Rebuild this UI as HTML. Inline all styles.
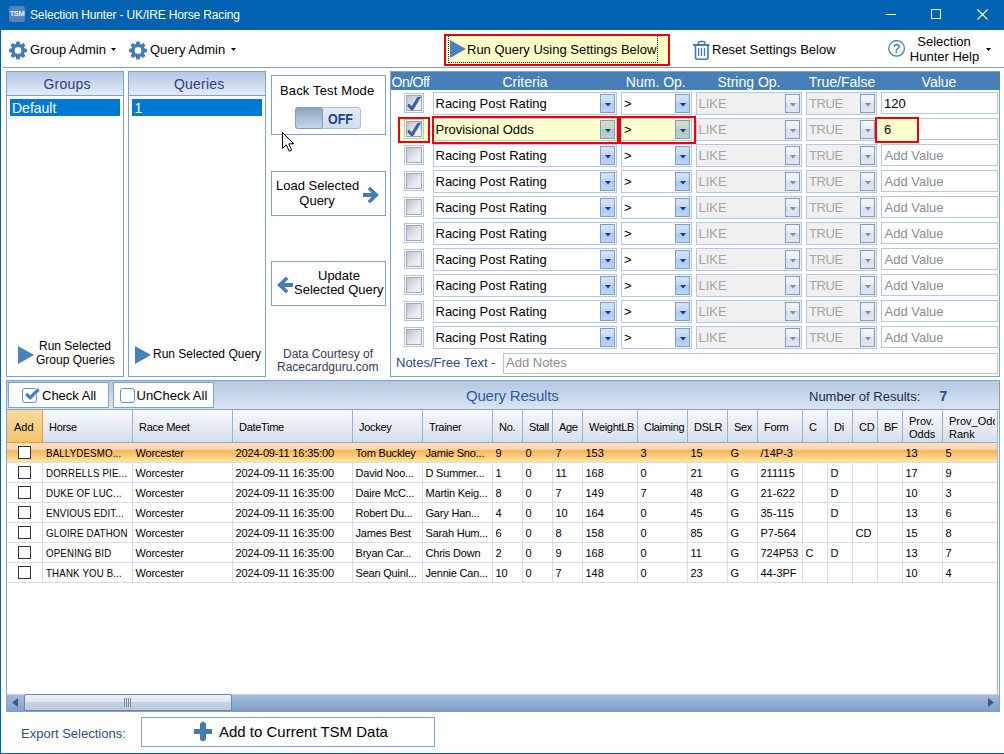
<!DOCTYPE html><html><head><meta charset="utf-8"><style>
html,body{margin:0;padding:0;}
body{width:1004px;height:754px;position:relative;overflow:hidden;background:#fff;font-family:"Liberation Sans", sans-serif;}
div{box-sizing:border-box;}
</style></head><body>
<div style="position:absolute;left:0px;top:0px;width:1004px;height:30px;background:#0062B0;"></div>
<div style="position:absolute;left:0px;top:30px;width:1px;height:724px;background:#0062B0;"></div>
<div style="position:absolute;left:0px;top:753px;width:1004px;height:1px;background:#0062B0;"></div>
<div style="position:absolute;left:9px;top:6px;width:16px;height:16px;background:#4F86BE;border-radius:2.5px;"></div>
<div style="position:absolute;left:9px;top:9px;width:16px;font-size:7.5px;line-height:10px;font-weight:700;color:#E8F0FA;text-align:center;letter-spacing:-0.4px;">TSM</div>
<div style="position:absolute;left:30px;top:8.34px;font-size:12px;line-height:15px;color:#fff;font-weight:400;white-space:nowrap;letter-spacing:-0.15px;">Selection Hunter - UK/IRE Horse Racing</div>
<div style="position:absolute;left:886px;top:14px;width:10px;height:1px;background:#fff;"></div>
<div style="position:absolute;left:931px;top:9px;width:10px;height:10px;border:1px solid #fff;"></div>
<svg style="position:absolute;left:977px;top:9px" width="11" height="11" viewBox="0 0 11 11"><path d="M0.5 0.5 L10.5 10.5 M10.5 0.5 L0.5 10.5" stroke="#fff" stroke-width="1.1"/></svg>
<svg style="position:absolute;left:9px;top:41px" width="19" height="19" viewBox="0 0 19 19"><path d="M15.34 7.33 L17.97 7.96 L17.97 11.04 L15.34 11.67 L15.02 12.45 L16.43 14.75 L14.25 16.93 L11.95 15.52 L11.17 15.84 L10.54 18.47 L7.46 18.47 L6.83 15.84 L6.05 15.52 L3.75 16.93 L1.57 14.75 L2.98 12.45 L2.66 11.67 L0.03 11.04 L0.03 7.96 L2.66 7.33 L2.98 6.55 L1.57 4.25 L3.75 2.07 L6.05 3.48 L6.83 3.16 L7.46 0.53 L10.54 0.53 L11.17 3.16 L11.95 3.48 L14.25 2.07 L16.43 4.25 L15.02 6.55 Z" fill="#437CB5"/><rect x="5.8" y="6.3" width="6.4" height="6.4" rx="2.2" fill="#fff"/></svg>
<div style="position:absolute;left:30px;top:41.50px;font-size:13px;line-height:16px;color:#000;font-weight:400;white-space:nowrap;">Group Admin</div>
<svg style="position:absolute;left:111px;top:48px" width="5" height="3" viewBox="0 0 5 3"><path d="M0 0 L5 0 L2.5 3 Z" fill="#000"/></svg>
<svg style="position:absolute;left:129px;top:41px" width="19" height="19" viewBox="0 0 19 19"><path d="M15.34 7.33 L17.97 7.96 L17.97 11.04 L15.34 11.67 L15.02 12.45 L16.43 14.75 L14.25 16.93 L11.95 15.52 L11.17 15.84 L10.54 18.47 L7.46 18.47 L6.83 15.84 L6.05 15.52 L3.75 16.93 L1.57 14.75 L2.98 12.45 L2.66 11.67 L0.03 11.04 L0.03 7.96 L2.66 7.33 L2.98 6.55 L1.57 4.25 L3.75 2.07 L6.05 3.48 L6.83 3.16 L7.46 0.53 L10.54 0.53 L11.17 3.16 L11.95 3.48 L14.25 2.07 L16.43 4.25 L15.02 6.55 Z" fill="#437CB5"/><rect x="5.8" y="6.3" width="6.4" height="6.4" rx="2.2" fill="#fff"/></svg>
<div style="position:absolute;left:150px;top:41.50px;font-size:13px;line-height:16px;color:#000;font-weight:400;white-space:nowrap;">Query Admin</div>
<svg style="position:absolute;left:231px;top:48px" width="5" height="3" viewBox="0 0 5 3"><path d="M0 0 L5 0 L2.5 3 Z" fill="#000"/></svg>
<div style="position:absolute;left:3px;top:67px;width:1001px;height:1px;background:#7DA2CE;"></div>
<div style="position:absolute;left:444px;top:34px;width:226px;height:32px;border:2px solid #F00000;background:#FFFFC8;"></div>
<div style="position:absolute;left:448px;top:36px;width:210px;height:27px;border:1px dotted #222;border-top:none;"></div>
<svg style="position:absolute;left:450px;top:40px" width="16" height="18" viewBox="0 0 16 18"><path d="M0 0 L16 9 L0 18 Z" fill="#4A82BF"/></svg>
<div style="position:absolute;left:467px;top:36px;width:190px;height:26px;overflow:hidden;">
</div>
<div style="position:absolute;left:467px;top:41.50px;font-size:13px;line-height:16px;color:#000;font-weight:400;white-space:nowrap;width:190px;overflow:hidden;">Run Query Using Settings Below</div>
<svg style="position:absolute;left:692px;top:40px" width="19" height="21" viewBox="0 0 19 21"><g fill="none" stroke="#437CB5"><rect x="1" y="4" width="16.5" height="2" fill="#437CB5" stroke="none"/><path d="M6.3 4.5 V3.2 Q6.3 1.5 8 1.5 H11 Q12.8 1.5 12.8 3.2 V4.5" stroke-width="1.6"/><path d="M3.5 6 V17.3 Q3.5 19.2 5.4 19.2 H14.1 Q16 19.2 16 17.3 V6" stroke-width="1.6"/><path d="M6.6 8 V16 M9.5 8 V16 M12.5 8 V16" stroke-width="1.3"/></g></svg>
<div style="position:absolute;left:712px;top:41.50px;font-size:13px;line-height:16px;color:#000;font-weight:400;white-space:nowrap;">Reset Settings Below</div>
<svg style="position:absolute;left:888px;top:40px" width="18" height="18" viewBox="0 0 18 18"><circle cx="8.6" cy="8.4" r="7.8" fill="none" stroke="#437CB5" stroke-width="1.3"/><text x="8.6" y="13" text-anchor="middle" font-family="Liberation Sans" font-size="12.5" fill="#437CB5" stroke="#437CB5" stroke-width="0.4">?</text></svg>
<div style="position:absolute;left:644px;width:600px;text-align:center;top:33.50px;font-size:13px;line-height:16px;color:#000;font-weight:400;white-space:nowrap;">Selection</div>
<div style="position:absolute;left:644.5px;width:600px;text-align:center;top:48.50px;font-size:13px;line-height:16px;color:#000;font-weight:400;white-space:nowrap;">Hunter Help</div>
<svg style="position:absolute;left:986px;top:48px" width="5" height="3" viewBox="0 0 5 3"><path d="M0 0 L5 0 L2.5 3 Z" fill="#000"/></svg>
<div style="position:absolute;left:6px;top:71px;width:118px;height:306px;border:1px solid #7DA2CE;"></div>
<div style="position:absolute;left:7px;top:72px;width:116px;height:23px;background:linear-gradient(#B3C6E4,#E4ECF7);"></div>
<div style="position:absolute;left:7px;top:95px;width:116px;height:1px;background:#7DA2CE;"></div>
<div style="position:absolute;left:43.5px;top:75.15px;font-size:14px;line-height:18px;color:#323C82;font-weight:400;white-space:nowrap;letter-spacing:0.2px;">Groups</div>
<div style="position:absolute;left:10px;top:99px;width:110px;height:17px;background:#0078D7;"></div>
<div style="position:absolute;left:12px;top:99.15px;font-size:14px;line-height:18px;color:#fff;font-weight:400;white-space:nowrap;">Default</div>
<div style="position:absolute;left:128px;top:71px;width:138px;height:306px;border:1px solid #7DA2CE;"></div>
<div style="position:absolute;left:129px;top:72px;width:136px;height:23px;background:linear-gradient(#B3C6E4,#E4ECF7);"></div>
<div style="position:absolute;left:129px;top:95px;width:136px;height:1px;background:#7DA2CE;"></div>
<div style="position:absolute;left:174px;top:75.15px;font-size:14px;line-height:18px;color:#323C82;font-weight:400;white-space:nowrap;letter-spacing:0.2px;">Queries</div>
<div style="position:absolute;left:132px;top:99px;width:130px;height:17px;background:#0078D7;"></div>
<div style="position:absolute;left:134.5px;top:99.15px;font-size:14px;line-height:18px;color:#fff;font-weight:400;white-space:nowrap;">1</div>
<svg style="position:absolute;left:18px;top:346px" width="16" height="18" viewBox="0 0 16 18"><path d="M0 0 L16 9 L0 18 Z" fill="#4A82BF"/></svg>
<div style="position:absolute;left:39px;top:339.34px;font-size:12px;line-height:15px;color:#000;font-weight:400;white-space:nowrap;">Run Selected</div>
<div style="position:absolute;left:36px;top:353.34px;font-size:12px;line-height:15px;color:#000;font-weight:400;white-space:nowrap;">Group Queries</div>
<svg style="position:absolute;left:135px;top:346px" width="16" height="18" viewBox="0 0 16 18"><path d="M0 0 L16 9 L0 18 Z" fill="#4A82BF"/></svg>
<div style="position:absolute;left:153px;top:347.34px;font-size:12px;line-height:15px;color:#000;font-weight:400;white-space:nowrap;">Run Selected Query</div>
<div style="position:absolute;left:271px;top:75px;width:115px;height:60px;border:1px solid #7DA2CE;"></div>
<div style="position:absolute;left:280px;top:82.50px;font-size:13px;line-height:16px;color:#000;font-weight:400;white-space:nowrap;letter-spacing:0.15px;">Back Test Mode</div>
<div style="position:absolute;left:295px;top:107px;width:66px;height:22px;border:1px solid #A9C0DE;border-radius:3px;background:linear-gradient(#E3EAF4,#D3DDEB);"></div>
<div style="position:absolute;left:295px;top:107px;width:28px;height:22px;border:1px solid #7F9DC6;border-radius:3px;background:linear-gradient(#8EA4BD,#C6D6EA);"></div>
<div style="position:absolute;left:328.3px;top:110.15px;font-size:14px;line-height:18px;color:#1F3F99;font-weight:700;white-space:nowrap;transform:scaleX(0.89);transform-origin:left;">OFF</div>
<div style="position:absolute;left:271px;top:171px;width:115px;height:45px;border:1px solid #7DA2CE;"></div>
<div style="position:absolute;left:276px;top:177.50px;font-size:13px;line-height:16px;color:#000;font-weight:400;white-space:nowrap;">Load Selected</div>
<div style="position:absolute;left:17px;width:600px;text-align:center;top:192.50px;font-size:13px;line-height:16px;color:#000;font-weight:400;white-space:nowrap;">Query</div>
<svg style="position:absolute;left:363px;top:187px" width="17" height="17" viewBox="0 0 17 17"><path d="M0 6.1 H8.6 L4.6 2.1 L7.1 -0.2 L16 8 L7.1 16.2 L4.6 13.9 L8.6 9.9 H0 Z" fill="#437CB5"/></svg>
<div style="position:absolute;left:271px;top:261px;width:115px;height:45px;border:1px solid #7DA2CE;"></div>
<div style="position:absolute;left:318px;top:267.50px;font-size:13px;line-height:16px;color:#000;font-weight:400;white-space:nowrap;">Update</div>
<div style="position:absolute;left:294px;top:281.50px;font-size:13px;line-height:16px;color:#000;font-weight:400;white-space:nowrap;">Selected Query</div>
<svg style="position:absolute;left:277px;top:277px" width="17" height="17" viewBox="0 0 17 17"><path d="M16 6.1 H7.4 L11.4 2.1 L8.9 -0.2 L0 8 L8.9 16.2 L11.4 13.9 L7.4 9.9 H16 Z" fill="#437CB5"/></svg>
<div style="position:absolute;left:283px;top:347.34px;font-size:12px;line-height:15px;color:#3A3A55;font-weight:400;white-space:nowrap;">Data Courtesy of</div>
<div style="position:absolute;left:277px;top:360.34px;font-size:12px;line-height:15px;color:#3A3A55;font-weight:400;white-space:nowrap;">Racecardguru.com</div>
<div style="position:absolute;left:390px;top:71px;width:610px;height:306px;border:1px solid #7DA2CE;"></div>
<div style="position:absolute;left:391px;top:72px;width:609px;height:18px;background:#4780B8;"></div>
<div style="position:absolute;left:391.5px;top:73.15px;font-size:14px;line-height:18px;color:#fff;font-weight:400;white-space:nowrap;letter-spacing:-0.5px;">On/Off</div>
<div style="position:absolute;left:225px;width:600px;text-align:center;top:73.15px;font-size:14px;line-height:18px;color:#fff;font-weight:400;white-space:nowrap;">Criteria</div>
<div style="position:absolute;left:355.79999999999995px;width:600px;text-align:center;top:73.15px;font-size:14px;line-height:18px;color:#fff;font-weight:400;white-space:nowrap;">Num. Op.</div>
<div style="position:absolute;left:449px;width:600px;text-align:center;top:73.15px;font-size:14px;line-height:18px;color:#fff;font-weight:400;white-space:nowrap;">String Op.</div>
<div style="position:absolute;left:542px;width:600px;text-align:center;top:73.15px;font-size:14px;line-height:18px;color:#fff;font-weight:400;white-space:nowrap;">True/False</div>
<div style="position:absolute;left:639px;width:600px;text-align:center;top:73.15px;font-size:14px;line-height:18px;color:#fff;font-weight:400;white-space:nowrap;">Value</div>
<div style="position:absolute;left:404px;top:93px;width:20px;height:20px;border:1px solid #AFC6E3;"></div>
<div style="position:absolute;left:406px;top:95px;width:16px;height:16px;border:1px solid #9CA6B4;background:linear-gradient(135deg,#BAC3D0,#E6E9EE 60%,#F0F2F5);"></div>
<svg style="position:absolute;left:400px;top:90px" width="28" height="26" viewBox="0 0 28 26"><path d="M7.9 14.3 Q8.8 13.5 9.8 14.2 L11.7 16.3 L17.3 7 L21.3 6.4 L13.1 20.3 L11.2 20.2 L7.6 16.4 Q7.3 15 7.9 14.3 Z" fill="#3F62A0"/></svg>
<div style="position:absolute;left:433px;top:92px;width:184px;height:23px;border:1px solid #B4C8E2;background:#fff;"></div>
<div style="position:absolute;left:435.5px;top:95.50px;font-size:13px;line-height:16px;color:#000;font-weight:400;white-space:nowrap;">Racing Post Rating</div>
<div style="position:absolute;left:600px;top:94px;width:15px;height:19px;border:1px solid #7F9CC8;background:linear-gradient(#D6E4F8 0%,#C3D8F6 45%,#A9CAF3 50%,#BBD6F8 100%);"></div>
<svg style="position:absolute;left:605px;top:103px" width="6" height="4" viewBox="0 0 6 4"><path d="M0 0 L6 0 L3 3.5 Z" fill="#1A3A7A"/></svg>
<div style="position:absolute;left:621px;top:92px;width:71px;height:23px;border:1px solid #B4C8E2;background:#fff;"></div>
<div style="position:absolute;left:624px;top:95.50px;font-size:13px;line-height:16px;color:#000;font-weight:400;white-space:nowrap;">&gt;</div>
<div style="position:absolute;left:675px;top:94px;width:15px;height:19px;border:1px solid #7F9CC8;background:linear-gradient(#D6E4F8 0%,#C3D8F6 45%,#A9CAF3 50%,#BBD6F8 100%);"></div>
<svg style="position:absolute;left:680px;top:103px" width="6" height="4" viewBox="0 0 6 4"><path d="M0 0 L6 0 L3 3.5 Z" fill="#1A3A7A"/></svg>
<div style="position:absolute;left:696px;top:92px;width:106px;height:23px;border:1px solid #B4C8E2;background:#F0F0F0;"></div>
<div style="position:absolute;left:698.5px;top:95.50px;font-size:13px;line-height:16px;color:#A6A6A6;font-weight:400;white-space:nowrap;">LIKE</div>
<div style="position:absolute;left:785px;top:94px;width:15px;height:19px;border:1px solid #7F9CC8;background:linear-gradient(#F4F7FC 0%,#E6EDF8 45%,#D5E1F1 50%,#DEE8F4 100%);"></div>
<svg style="position:absolute;left:790px;top:103px" width="6" height="4" viewBox="0 0 6 4"><path d="M0 0 L6 0 L3 3.5 Z" fill="#8A8A8A"/></svg>
<div style="position:absolute;left:806px;top:92px;width:71px;height:23px;border:1px solid #B4C8E2;background:#F0F0F0;"></div>
<div style="position:absolute;left:809px;top:95.50px;font-size:13px;line-height:16px;color:#A6A6A6;font-weight:400;white-space:nowrap;letter-spacing:-0.4px;">TRUE</div>
<div style="position:absolute;left:860px;top:94px;width:15px;height:19px;border:1px solid #7F9CC8;background:linear-gradient(#F4F7FC 0%,#E6EDF8 45%,#D5E1F1 50%,#DEE8F4 100%);"></div>
<svg style="position:absolute;left:865px;top:103px" width="6" height="4" viewBox="0 0 6 4"><path d="M0 0 L6 0 L3 3.5 Z" fill="#8A8A8A"/></svg>
<div style="position:absolute;left:881px;top:92px;width:117px;height:22px;border:1px solid #B4C8E2;background:#fff;"></div>
<div style="position:absolute;left:884px;top:95.50px;font-size:13px;line-height:16px;color:#000;font-weight:400;white-space:nowrap;">120</div>
<div style="position:absolute;left:398px;top:117px;width:32px;height:26px;border:2px solid #F00000;background:#FFFFD0;"></div>
<div style="position:absolute;left:404px;top:119px;width:20px;height:20px;border:1px solid #AFC6E3;background:#FFFFD0;"></div>
<div style="position:absolute;left:406px;top:121px;width:16px;height:16px;border:1px solid #9CA6B4;background:linear-gradient(135deg,#BAC3D0,#E6E9EE 60%,#F0F2F5);"></div>
<svg style="position:absolute;left:400px;top:116px" width="28" height="26" viewBox="0 0 28 26"><path d="M7.9 14.3 Q8.8 13.5 9.8 14.2 L11.7 16.3 L17.3 7 L21.3 6.4 L13.1 20.3 L11.2 20.2 L7.6 16.4 Q7.3 15 7.9 14.3 Z" fill="#3F62A0"/></svg>
<div style="position:absolute;left:433px;top:118px;width:184px;height:23px;border:1px solid #B4C8E2;background:#FFFFD0;"></div>
<div style="position:absolute;left:435.5px;top:121.50px;font-size:13px;line-height:16px;color:#000;font-weight:400;white-space:nowrap;">Provisional Odds</div>
<div style="position:absolute;left:600px;top:120px;width:15px;height:19px;border:1px solid #7F9CC8;background:linear-gradient(#D3E0C8 0%,#C4D8C6 45%,#AFCBC4 50%,#BAD3C8 100%);"></div>
<svg style="position:absolute;left:605px;top:129px" width="6" height="4" viewBox="0 0 6 4"><path d="M0 0 L6 0 L3 3.5 Z" fill="#1A3A7A"/></svg>
<div style="position:absolute;left:621px;top:118px;width:71px;height:23px;border:1px solid #B4C8E2;background:#FFFFD0;"></div>
<div style="position:absolute;left:624px;top:121.50px;font-size:13px;line-height:16px;color:#000;font-weight:400;white-space:nowrap;">&gt;</div>
<div style="position:absolute;left:675px;top:120px;width:15px;height:19px;border:1px solid #7F9CC8;background:linear-gradient(#D3E0C8 0%,#C4D8C6 45%,#AFCBC4 50%,#BAD3C8 100%);"></div>
<svg style="position:absolute;left:680px;top:129px" width="6" height="4" viewBox="0 0 6 4"><path d="M0 0 L6 0 L3 3.5 Z" fill="#1A3A7A"/></svg>
<div style="position:absolute;left:696px;top:118px;width:106px;height:23px;border:1px solid #B4C8E2;background:#F0F0F0;"></div>
<div style="position:absolute;left:698.5px;top:121.50px;font-size:13px;line-height:16px;color:#A6A6A6;font-weight:400;white-space:nowrap;">LIKE</div>
<div style="position:absolute;left:785px;top:120px;width:15px;height:19px;border:1px solid #7F9CC8;background:linear-gradient(#F4F7FC 0%,#E6EDF8 45%,#D5E1F1 50%,#DEE8F4 100%);"></div>
<svg style="position:absolute;left:790px;top:129px" width="6" height="4" viewBox="0 0 6 4"><path d="M0 0 L6 0 L3 3.5 Z" fill="#8A8A8A"/></svg>
<div style="position:absolute;left:806px;top:118px;width:71px;height:23px;border:1px solid #B4C8E2;background:#F0F0F0;"></div>
<div style="position:absolute;left:809px;top:121.50px;font-size:13px;line-height:16px;color:#A6A6A6;font-weight:400;white-space:nowrap;letter-spacing:-0.4px;">TRUE</div>
<div style="position:absolute;left:860px;top:120px;width:15px;height:19px;border:1px solid #7F9CC8;background:linear-gradient(#F4F7FC 0%,#E6EDF8 45%,#D5E1F1 50%,#DEE8F4 100%);"></div>
<svg style="position:absolute;left:865px;top:129px" width="6" height="4" viewBox="0 0 6 4"><path d="M0 0 L6 0 L3 3.5 Z" fill="#8A8A8A"/></svg>
<div style="position:absolute;left:881px;top:118px;width:117px;height:22px;border:1px solid #B4C8E2;background:#fff;"></div>
<div style="position:absolute;left:875px;top:117px;width:44px;height:26px;border:2px solid #F00000;background:#FFFFD0;"></div>
<div style="position:absolute;left:884px;top:121.50px;font-size:13px;line-height:16px;color:#000;font-weight:400;white-space:nowrap;">6</div>
<div style="position:absolute;left:404px;top:145px;width:20px;height:20px;border:1px solid #AFC6E3;"></div>
<div style="position:absolute;left:406px;top:147px;width:16px;height:16px;border:1px solid #9CA6B4;background:linear-gradient(135deg,#BAC3D0,#E6E9EE 60%,#F0F2F5);"></div>
<div style="position:absolute;left:433px;top:144px;width:184px;height:23px;border:1px solid #B4C8E2;background:#fff;"></div>
<div style="position:absolute;left:435.5px;top:147.50px;font-size:13px;line-height:16px;color:#000;font-weight:400;white-space:nowrap;">Racing Post Rating</div>
<div style="position:absolute;left:600px;top:146px;width:15px;height:19px;border:1px solid #7F9CC8;background:linear-gradient(#D6E4F8 0%,#C3D8F6 45%,#A9CAF3 50%,#BBD6F8 100%);"></div>
<svg style="position:absolute;left:605px;top:155px" width="6" height="4" viewBox="0 0 6 4"><path d="M0 0 L6 0 L3 3.5 Z" fill="#1A3A7A"/></svg>
<div style="position:absolute;left:621px;top:144px;width:71px;height:23px;border:1px solid #B4C8E2;background:#fff;"></div>
<div style="position:absolute;left:624px;top:147.50px;font-size:13px;line-height:16px;color:#000;font-weight:400;white-space:nowrap;">&gt;</div>
<div style="position:absolute;left:675px;top:146px;width:15px;height:19px;border:1px solid #7F9CC8;background:linear-gradient(#D6E4F8 0%,#C3D8F6 45%,#A9CAF3 50%,#BBD6F8 100%);"></div>
<svg style="position:absolute;left:680px;top:155px" width="6" height="4" viewBox="0 0 6 4"><path d="M0 0 L6 0 L3 3.5 Z" fill="#1A3A7A"/></svg>
<div style="position:absolute;left:696px;top:144px;width:106px;height:23px;border:1px solid #B4C8E2;background:#F0F0F0;"></div>
<div style="position:absolute;left:698.5px;top:147.50px;font-size:13px;line-height:16px;color:#A6A6A6;font-weight:400;white-space:nowrap;">LIKE</div>
<div style="position:absolute;left:785px;top:146px;width:15px;height:19px;border:1px solid #7F9CC8;background:linear-gradient(#F4F7FC 0%,#E6EDF8 45%,#D5E1F1 50%,#DEE8F4 100%);"></div>
<svg style="position:absolute;left:790px;top:155px" width="6" height="4" viewBox="0 0 6 4"><path d="M0 0 L6 0 L3 3.5 Z" fill="#8A8A8A"/></svg>
<div style="position:absolute;left:806px;top:144px;width:71px;height:23px;border:1px solid #B4C8E2;background:#F0F0F0;"></div>
<div style="position:absolute;left:809px;top:147.50px;font-size:13px;line-height:16px;color:#A6A6A6;font-weight:400;white-space:nowrap;letter-spacing:-0.4px;">TRUE</div>
<div style="position:absolute;left:860px;top:146px;width:15px;height:19px;border:1px solid #7F9CC8;background:linear-gradient(#F4F7FC 0%,#E6EDF8 45%,#D5E1F1 50%,#DEE8F4 100%);"></div>
<svg style="position:absolute;left:865px;top:155px" width="6" height="4" viewBox="0 0 6 4"><path d="M0 0 L6 0 L3 3.5 Z" fill="#8A8A8A"/></svg>
<div style="position:absolute;left:881px;top:144px;width:117px;height:22px;border:1px solid #B4C8E2;background:#fff;"></div>
<div style="position:absolute;left:884.5px;top:147.50px;font-size:13px;line-height:16px;color:#8C8C8C;font-weight:400;white-space:nowrap;">Add Value</div>
<div style="position:absolute;left:404px;top:171px;width:20px;height:20px;border:1px solid #AFC6E3;"></div>
<div style="position:absolute;left:406px;top:173px;width:16px;height:16px;border:1px solid #9CA6B4;background:linear-gradient(135deg,#BAC3D0,#E6E9EE 60%,#F0F2F5);"></div>
<div style="position:absolute;left:433px;top:170px;width:184px;height:23px;border:1px solid #B4C8E2;background:#fff;"></div>
<div style="position:absolute;left:435.5px;top:173.50px;font-size:13px;line-height:16px;color:#000;font-weight:400;white-space:nowrap;">Racing Post Rating</div>
<div style="position:absolute;left:600px;top:172px;width:15px;height:19px;border:1px solid #7F9CC8;background:linear-gradient(#D6E4F8 0%,#C3D8F6 45%,#A9CAF3 50%,#BBD6F8 100%);"></div>
<svg style="position:absolute;left:605px;top:181px" width="6" height="4" viewBox="0 0 6 4"><path d="M0 0 L6 0 L3 3.5 Z" fill="#1A3A7A"/></svg>
<div style="position:absolute;left:621px;top:170px;width:71px;height:23px;border:1px solid #B4C8E2;background:#fff;"></div>
<div style="position:absolute;left:624px;top:173.50px;font-size:13px;line-height:16px;color:#000;font-weight:400;white-space:nowrap;">&gt;</div>
<div style="position:absolute;left:675px;top:172px;width:15px;height:19px;border:1px solid #7F9CC8;background:linear-gradient(#D6E4F8 0%,#C3D8F6 45%,#A9CAF3 50%,#BBD6F8 100%);"></div>
<svg style="position:absolute;left:680px;top:181px" width="6" height="4" viewBox="0 0 6 4"><path d="M0 0 L6 0 L3 3.5 Z" fill="#1A3A7A"/></svg>
<div style="position:absolute;left:696px;top:170px;width:106px;height:23px;border:1px solid #B4C8E2;background:#F0F0F0;"></div>
<div style="position:absolute;left:698.5px;top:173.50px;font-size:13px;line-height:16px;color:#A6A6A6;font-weight:400;white-space:nowrap;">LIKE</div>
<div style="position:absolute;left:785px;top:172px;width:15px;height:19px;border:1px solid #7F9CC8;background:linear-gradient(#F4F7FC 0%,#E6EDF8 45%,#D5E1F1 50%,#DEE8F4 100%);"></div>
<svg style="position:absolute;left:790px;top:181px" width="6" height="4" viewBox="0 0 6 4"><path d="M0 0 L6 0 L3 3.5 Z" fill="#8A8A8A"/></svg>
<div style="position:absolute;left:806px;top:170px;width:71px;height:23px;border:1px solid #B4C8E2;background:#F0F0F0;"></div>
<div style="position:absolute;left:809px;top:173.50px;font-size:13px;line-height:16px;color:#A6A6A6;font-weight:400;white-space:nowrap;letter-spacing:-0.4px;">TRUE</div>
<div style="position:absolute;left:860px;top:172px;width:15px;height:19px;border:1px solid #7F9CC8;background:linear-gradient(#F4F7FC 0%,#E6EDF8 45%,#D5E1F1 50%,#DEE8F4 100%);"></div>
<svg style="position:absolute;left:865px;top:181px" width="6" height="4" viewBox="0 0 6 4"><path d="M0 0 L6 0 L3 3.5 Z" fill="#8A8A8A"/></svg>
<div style="position:absolute;left:881px;top:170px;width:117px;height:22px;border:1px solid #B4C8E2;background:#fff;"></div>
<div style="position:absolute;left:884.5px;top:173.50px;font-size:13px;line-height:16px;color:#8C8C8C;font-weight:400;white-space:nowrap;">Add Value</div>
<div style="position:absolute;left:404px;top:197px;width:20px;height:20px;border:1px solid #AFC6E3;"></div>
<div style="position:absolute;left:406px;top:199px;width:16px;height:16px;border:1px solid #9CA6B4;background:linear-gradient(135deg,#BAC3D0,#E6E9EE 60%,#F0F2F5);"></div>
<div style="position:absolute;left:433px;top:196px;width:184px;height:23px;border:1px solid #B4C8E2;background:#fff;"></div>
<div style="position:absolute;left:435.5px;top:199.50px;font-size:13px;line-height:16px;color:#000;font-weight:400;white-space:nowrap;">Racing Post Rating</div>
<div style="position:absolute;left:600px;top:198px;width:15px;height:19px;border:1px solid #7F9CC8;background:linear-gradient(#D6E4F8 0%,#C3D8F6 45%,#A9CAF3 50%,#BBD6F8 100%);"></div>
<svg style="position:absolute;left:605px;top:207px" width="6" height="4" viewBox="0 0 6 4"><path d="M0 0 L6 0 L3 3.5 Z" fill="#1A3A7A"/></svg>
<div style="position:absolute;left:621px;top:196px;width:71px;height:23px;border:1px solid #B4C8E2;background:#fff;"></div>
<div style="position:absolute;left:624px;top:199.50px;font-size:13px;line-height:16px;color:#000;font-weight:400;white-space:nowrap;">&gt;</div>
<div style="position:absolute;left:675px;top:198px;width:15px;height:19px;border:1px solid #7F9CC8;background:linear-gradient(#D6E4F8 0%,#C3D8F6 45%,#A9CAF3 50%,#BBD6F8 100%);"></div>
<svg style="position:absolute;left:680px;top:207px" width="6" height="4" viewBox="0 0 6 4"><path d="M0 0 L6 0 L3 3.5 Z" fill="#1A3A7A"/></svg>
<div style="position:absolute;left:696px;top:196px;width:106px;height:23px;border:1px solid #B4C8E2;background:#F0F0F0;"></div>
<div style="position:absolute;left:698.5px;top:199.50px;font-size:13px;line-height:16px;color:#A6A6A6;font-weight:400;white-space:nowrap;">LIKE</div>
<div style="position:absolute;left:785px;top:198px;width:15px;height:19px;border:1px solid #7F9CC8;background:linear-gradient(#F4F7FC 0%,#E6EDF8 45%,#D5E1F1 50%,#DEE8F4 100%);"></div>
<svg style="position:absolute;left:790px;top:207px" width="6" height="4" viewBox="0 0 6 4"><path d="M0 0 L6 0 L3 3.5 Z" fill="#8A8A8A"/></svg>
<div style="position:absolute;left:806px;top:196px;width:71px;height:23px;border:1px solid #B4C8E2;background:#F0F0F0;"></div>
<div style="position:absolute;left:809px;top:199.50px;font-size:13px;line-height:16px;color:#A6A6A6;font-weight:400;white-space:nowrap;letter-spacing:-0.4px;">TRUE</div>
<div style="position:absolute;left:860px;top:198px;width:15px;height:19px;border:1px solid #7F9CC8;background:linear-gradient(#F4F7FC 0%,#E6EDF8 45%,#D5E1F1 50%,#DEE8F4 100%);"></div>
<svg style="position:absolute;left:865px;top:207px" width="6" height="4" viewBox="0 0 6 4"><path d="M0 0 L6 0 L3 3.5 Z" fill="#8A8A8A"/></svg>
<div style="position:absolute;left:881px;top:196px;width:117px;height:22px;border:1px solid #B4C8E2;background:#fff;"></div>
<div style="position:absolute;left:884.5px;top:199.50px;font-size:13px;line-height:16px;color:#8C8C8C;font-weight:400;white-space:nowrap;">Add Value</div>
<div style="position:absolute;left:404px;top:223px;width:20px;height:20px;border:1px solid #AFC6E3;"></div>
<div style="position:absolute;left:406px;top:225px;width:16px;height:16px;border:1px solid #9CA6B4;background:linear-gradient(135deg,#BAC3D0,#E6E9EE 60%,#F0F2F5);"></div>
<div style="position:absolute;left:433px;top:222px;width:184px;height:23px;border:1px solid #B4C8E2;background:#fff;"></div>
<div style="position:absolute;left:435.5px;top:225.50px;font-size:13px;line-height:16px;color:#000;font-weight:400;white-space:nowrap;">Racing Post Rating</div>
<div style="position:absolute;left:600px;top:224px;width:15px;height:19px;border:1px solid #7F9CC8;background:linear-gradient(#D6E4F8 0%,#C3D8F6 45%,#A9CAF3 50%,#BBD6F8 100%);"></div>
<svg style="position:absolute;left:605px;top:233px" width="6" height="4" viewBox="0 0 6 4"><path d="M0 0 L6 0 L3 3.5 Z" fill="#1A3A7A"/></svg>
<div style="position:absolute;left:621px;top:222px;width:71px;height:23px;border:1px solid #B4C8E2;background:#fff;"></div>
<div style="position:absolute;left:624px;top:225.50px;font-size:13px;line-height:16px;color:#000;font-weight:400;white-space:nowrap;">&gt;</div>
<div style="position:absolute;left:675px;top:224px;width:15px;height:19px;border:1px solid #7F9CC8;background:linear-gradient(#D6E4F8 0%,#C3D8F6 45%,#A9CAF3 50%,#BBD6F8 100%);"></div>
<svg style="position:absolute;left:680px;top:233px" width="6" height="4" viewBox="0 0 6 4"><path d="M0 0 L6 0 L3 3.5 Z" fill="#1A3A7A"/></svg>
<div style="position:absolute;left:696px;top:222px;width:106px;height:23px;border:1px solid #B4C8E2;background:#F0F0F0;"></div>
<div style="position:absolute;left:698.5px;top:225.50px;font-size:13px;line-height:16px;color:#A6A6A6;font-weight:400;white-space:nowrap;">LIKE</div>
<div style="position:absolute;left:785px;top:224px;width:15px;height:19px;border:1px solid #7F9CC8;background:linear-gradient(#F4F7FC 0%,#E6EDF8 45%,#D5E1F1 50%,#DEE8F4 100%);"></div>
<svg style="position:absolute;left:790px;top:233px" width="6" height="4" viewBox="0 0 6 4"><path d="M0 0 L6 0 L3 3.5 Z" fill="#8A8A8A"/></svg>
<div style="position:absolute;left:806px;top:222px;width:71px;height:23px;border:1px solid #B4C8E2;background:#F0F0F0;"></div>
<div style="position:absolute;left:809px;top:225.50px;font-size:13px;line-height:16px;color:#A6A6A6;font-weight:400;white-space:nowrap;letter-spacing:-0.4px;">TRUE</div>
<div style="position:absolute;left:860px;top:224px;width:15px;height:19px;border:1px solid #7F9CC8;background:linear-gradient(#F4F7FC 0%,#E6EDF8 45%,#D5E1F1 50%,#DEE8F4 100%);"></div>
<svg style="position:absolute;left:865px;top:233px" width="6" height="4" viewBox="0 0 6 4"><path d="M0 0 L6 0 L3 3.5 Z" fill="#8A8A8A"/></svg>
<div style="position:absolute;left:881px;top:222px;width:117px;height:22px;border:1px solid #B4C8E2;background:#fff;"></div>
<div style="position:absolute;left:884.5px;top:225.50px;font-size:13px;line-height:16px;color:#8C8C8C;font-weight:400;white-space:nowrap;">Add Value</div>
<div style="position:absolute;left:404px;top:249px;width:20px;height:20px;border:1px solid #AFC6E3;"></div>
<div style="position:absolute;left:406px;top:251px;width:16px;height:16px;border:1px solid #9CA6B4;background:linear-gradient(135deg,#BAC3D0,#E6E9EE 60%,#F0F2F5);"></div>
<div style="position:absolute;left:433px;top:248px;width:184px;height:23px;border:1px solid #B4C8E2;background:#fff;"></div>
<div style="position:absolute;left:435.5px;top:251.50px;font-size:13px;line-height:16px;color:#000;font-weight:400;white-space:nowrap;">Racing Post Rating</div>
<div style="position:absolute;left:600px;top:250px;width:15px;height:19px;border:1px solid #7F9CC8;background:linear-gradient(#D6E4F8 0%,#C3D8F6 45%,#A9CAF3 50%,#BBD6F8 100%);"></div>
<svg style="position:absolute;left:605px;top:259px" width="6" height="4" viewBox="0 0 6 4"><path d="M0 0 L6 0 L3 3.5 Z" fill="#1A3A7A"/></svg>
<div style="position:absolute;left:621px;top:248px;width:71px;height:23px;border:1px solid #B4C8E2;background:#fff;"></div>
<div style="position:absolute;left:624px;top:251.50px;font-size:13px;line-height:16px;color:#000;font-weight:400;white-space:nowrap;">&gt;</div>
<div style="position:absolute;left:675px;top:250px;width:15px;height:19px;border:1px solid #7F9CC8;background:linear-gradient(#D6E4F8 0%,#C3D8F6 45%,#A9CAF3 50%,#BBD6F8 100%);"></div>
<svg style="position:absolute;left:680px;top:259px" width="6" height="4" viewBox="0 0 6 4"><path d="M0 0 L6 0 L3 3.5 Z" fill="#1A3A7A"/></svg>
<div style="position:absolute;left:696px;top:248px;width:106px;height:23px;border:1px solid #B4C8E2;background:#F0F0F0;"></div>
<div style="position:absolute;left:698.5px;top:251.50px;font-size:13px;line-height:16px;color:#A6A6A6;font-weight:400;white-space:nowrap;">LIKE</div>
<div style="position:absolute;left:785px;top:250px;width:15px;height:19px;border:1px solid #7F9CC8;background:linear-gradient(#F4F7FC 0%,#E6EDF8 45%,#D5E1F1 50%,#DEE8F4 100%);"></div>
<svg style="position:absolute;left:790px;top:259px" width="6" height="4" viewBox="0 0 6 4"><path d="M0 0 L6 0 L3 3.5 Z" fill="#8A8A8A"/></svg>
<div style="position:absolute;left:806px;top:248px;width:71px;height:23px;border:1px solid #B4C8E2;background:#F0F0F0;"></div>
<div style="position:absolute;left:809px;top:251.50px;font-size:13px;line-height:16px;color:#A6A6A6;font-weight:400;white-space:nowrap;letter-spacing:-0.4px;">TRUE</div>
<div style="position:absolute;left:860px;top:250px;width:15px;height:19px;border:1px solid #7F9CC8;background:linear-gradient(#F4F7FC 0%,#E6EDF8 45%,#D5E1F1 50%,#DEE8F4 100%);"></div>
<svg style="position:absolute;left:865px;top:259px" width="6" height="4" viewBox="0 0 6 4"><path d="M0 0 L6 0 L3 3.5 Z" fill="#8A8A8A"/></svg>
<div style="position:absolute;left:881px;top:248px;width:117px;height:22px;border:1px solid #B4C8E2;background:#fff;"></div>
<div style="position:absolute;left:884.5px;top:251.50px;font-size:13px;line-height:16px;color:#8C8C8C;font-weight:400;white-space:nowrap;">Add Value</div>
<div style="position:absolute;left:404px;top:275px;width:20px;height:20px;border:1px solid #AFC6E3;"></div>
<div style="position:absolute;left:406px;top:277px;width:16px;height:16px;border:1px solid #9CA6B4;background:linear-gradient(135deg,#BAC3D0,#E6E9EE 60%,#F0F2F5);"></div>
<div style="position:absolute;left:433px;top:274px;width:184px;height:23px;border:1px solid #B4C8E2;background:#fff;"></div>
<div style="position:absolute;left:435.5px;top:277.50px;font-size:13px;line-height:16px;color:#000;font-weight:400;white-space:nowrap;">Racing Post Rating</div>
<div style="position:absolute;left:600px;top:276px;width:15px;height:19px;border:1px solid #7F9CC8;background:linear-gradient(#D6E4F8 0%,#C3D8F6 45%,#A9CAF3 50%,#BBD6F8 100%);"></div>
<svg style="position:absolute;left:605px;top:285px" width="6" height="4" viewBox="0 0 6 4"><path d="M0 0 L6 0 L3 3.5 Z" fill="#1A3A7A"/></svg>
<div style="position:absolute;left:621px;top:274px;width:71px;height:23px;border:1px solid #B4C8E2;background:#fff;"></div>
<div style="position:absolute;left:624px;top:277.50px;font-size:13px;line-height:16px;color:#000;font-weight:400;white-space:nowrap;">&gt;</div>
<div style="position:absolute;left:675px;top:276px;width:15px;height:19px;border:1px solid #7F9CC8;background:linear-gradient(#D6E4F8 0%,#C3D8F6 45%,#A9CAF3 50%,#BBD6F8 100%);"></div>
<svg style="position:absolute;left:680px;top:285px" width="6" height="4" viewBox="0 0 6 4"><path d="M0 0 L6 0 L3 3.5 Z" fill="#1A3A7A"/></svg>
<div style="position:absolute;left:696px;top:274px;width:106px;height:23px;border:1px solid #B4C8E2;background:#F0F0F0;"></div>
<div style="position:absolute;left:698.5px;top:277.50px;font-size:13px;line-height:16px;color:#A6A6A6;font-weight:400;white-space:nowrap;">LIKE</div>
<div style="position:absolute;left:785px;top:276px;width:15px;height:19px;border:1px solid #7F9CC8;background:linear-gradient(#F4F7FC 0%,#E6EDF8 45%,#D5E1F1 50%,#DEE8F4 100%);"></div>
<svg style="position:absolute;left:790px;top:285px" width="6" height="4" viewBox="0 0 6 4"><path d="M0 0 L6 0 L3 3.5 Z" fill="#8A8A8A"/></svg>
<div style="position:absolute;left:806px;top:274px;width:71px;height:23px;border:1px solid #B4C8E2;background:#F0F0F0;"></div>
<div style="position:absolute;left:809px;top:277.50px;font-size:13px;line-height:16px;color:#A6A6A6;font-weight:400;white-space:nowrap;letter-spacing:-0.4px;">TRUE</div>
<div style="position:absolute;left:860px;top:276px;width:15px;height:19px;border:1px solid #7F9CC8;background:linear-gradient(#F4F7FC 0%,#E6EDF8 45%,#D5E1F1 50%,#DEE8F4 100%);"></div>
<svg style="position:absolute;left:865px;top:285px" width="6" height="4" viewBox="0 0 6 4"><path d="M0 0 L6 0 L3 3.5 Z" fill="#8A8A8A"/></svg>
<div style="position:absolute;left:881px;top:274px;width:117px;height:22px;border:1px solid #B4C8E2;background:#fff;"></div>
<div style="position:absolute;left:884.5px;top:277.50px;font-size:13px;line-height:16px;color:#8C8C8C;font-weight:400;white-space:nowrap;">Add Value</div>
<div style="position:absolute;left:404px;top:301px;width:20px;height:20px;border:1px solid #AFC6E3;"></div>
<div style="position:absolute;left:406px;top:303px;width:16px;height:16px;border:1px solid #9CA6B4;background:linear-gradient(135deg,#BAC3D0,#E6E9EE 60%,#F0F2F5);"></div>
<div style="position:absolute;left:433px;top:300px;width:184px;height:23px;border:1px solid #B4C8E2;background:#fff;"></div>
<div style="position:absolute;left:435.5px;top:303.50px;font-size:13px;line-height:16px;color:#000;font-weight:400;white-space:nowrap;">Racing Post Rating</div>
<div style="position:absolute;left:600px;top:302px;width:15px;height:19px;border:1px solid #7F9CC8;background:linear-gradient(#D6E4F8 0%,#C3D8F6 45%,#A9CAF3 50%,#BBD6F8 100%);"></div>
<svg style="position:absolute;left:605px;top:311px" width="6" height="4" viewBox="0 0 6 4"><path d="M0 0 L6 0 L3 3.5 Z" fill="#1A3A7A"/></svg>
<div style="position:absolute;left:621px;top:300px;width:71px;height:23px;border:1px solid #B4C8E2;background:#fff;"></div>
<div style="position:absolute;left:624px;top:303.50px;font-size:13px;line-height:16px;color:#000;font-weight:400;white-space:nowrap;">&gt;</div>
<div style="position:absolute;left:675px;top:302px;width:15px;height:19px;border:1px solid #7F9CC8;background:linear-gradient(#D6E4F8 0%,#C3D8F6 45%,#A9CAF3 50%,#BBD6F8 100%);"></div>
<svg style="position:absolute;left:680px;top:311px" width="6" height="4" viewBox="0 0 6 4"><path d="M0 0 L6 0 L3 3.5 Z" fill="#1A3A7A"/></svg>
<div style="position:absolute;left:696px;top:300px;width:106px;height:23px;border:1px solid #B4C8E2;background:#F0F0F0;"></div>
<div style="position:absolute;left:698.5px;top:303.50px;font-size:13px;line-height:16px;color:#A6A6A6;font-weight:400;white-space:nowrap;">LIKE</div>
<div style="position:absolute;left:785px;top:302px;width:15px;height:19px;border:1px solid #7F9CC8;background:linear-gradient(#F4F7FC 0%,#E6EDF8 45%,#D5E1F1 50%,#DEE8F4 100%);"></div>
<svg style="position:absolute;left:790px;top:311px" width="6" height="4" viewBox="0 0 6 4"><path d="M0 0 L6 0 L3 3.5 Z" fill="#8A8A8A"/></svg>
<div style="position:absolute;left:806px;top:300px;width:71px;height:23px;border:1px solid #B4C8E2;background:#F0F0F0;"></div>
<div style="position:absolute;left:809px;top:303.50px;font-size:13px;line-height:16px;color:#A6A6A6;font-weight:400;white-space:nowrap;letter-spacing:-0.4px;">TRUE</div>
<div style="position:absolute;left:860px;top:302px;width:15px;height:19px;border:1px solid #7F9CC8;background:linear-gradient(#F4F7FC 0%,#E6EDF8 45%,#D5E1F1 50%,#DEE8F4 100%);"></div>
<svg style="position:absolute;left:865px;top:311px" width="6" height="4" viewBox="0 0 6 4"><path d="M0 0 L6 0 L3 3.5 Z" fill="#8A8A8A"/></svg>
<div style="position:absolute;left:881px;top:300px;width:117px;height:22px;border:1px solid #B4C8E2;background:#fff;"></div>
<div style="position:absolute;left:884.5px;top:303.50px;font-size:13px;line-height:16px;color:#8C8C8C;font-weight:400;white-space:nowrap;">Add Value</div>
<div style="position:absolute;left:404px;top:327px;width:20px;height:20px;border:1px solid #AFC6E3;"></div>
<div style="position:absolute;left:406px;top:329px;width:16px;height:16px;border:1px solid #9CA6B4;background:linear-gradient(135deg,#BAC3D0,#E6E9EE 60%,#F0F2F5);"></div>
<div style="position:absolute;left:433px;top:326px;width:184px;height:23px;border:1px solid #B4C8E2;background:#fff;"></div>
<div style="position:absolute;left:435.5px;top:329.50px;font-size:13px;line-height:16px;color:#000;font-weight:400;white-space:nowrap;">Racing Post Rating</div>
<div style="position:absolute;left:600px;top:328px;width:15px;height:19px;border:1px solid #7F9CC8;background:linear-gradient(#D6E4F8 0%,#C3D8F6 45%,#A9CAF3 50%,#BBD6F8 100%);"></div>
<svg style="position:absolute;left:605px;top:337px" width="6" height="4" viewBox="0 0 6 4"><path d="M0 0 L6 0 L3 3.5 Z" fill="#1A3A7A"/></svg>
<div style="position:absolute;left:621px;top:326px;width:71px;height:23px;border:1px solid #B4C8E2;background:#fff;"></div>
<div style="position:absolute;left:624px;top:329.50px;font-size:13px;line-height:16px;color:#000;font-weight:400;white-space:nowrap;">&gt;</div>
<div style="position:absolute;left:675px;top:328px;width:15px;height:19px;border:1px solid #7F9CC8;background:linear-gradient(#D6E4F8 0%,#C3D8F6 45%,#A9CAF3 50%,#BBD6F8 100%);"></div>
<svg style="position:absolute;left:680px;top:337px" width="6" height="4" viewBox="0 0 6 4"><path d="M0 0 L6 0 L3 3.5 Z" fill="#1A3A7A"/></svg>
<div style="position:absolute;left:696px;top:326px;width:106px;height:23px;border:1px solid #B4C8E2;background:#F0F0F0;"></div>
<div style="position:absolute;left:698.5px;top:329.50px;font-size:13px;line-height:16px;color:#A6A6A6;font-weight:400;white-space:nowrap;">LIKE</div>
<div style="position:absolute;left:785px;top:328px;width:15px;height:19px;border:1px solid #7F9CC8;background:linear-gradient(#F4F7FC 0%,#E6EDF8 45%,#D5E1F1 50%,#DEE8F4 100%);"></div>
<svg style="position:absolute;left:790px;top:337px" width="6" height="4" viewBox="0 0 6 4"><path d="M0 0 L6 0 L3 3.5 Z" fill="#8A8A8A"/></svg>
<div style="position:absolute;left:806px;top:326px;width:71px;height:23px;border:1px solid #B4C8E2;background:#F0F0F0;"></div>
<div style="position:absolute;left:809px;top:329.50px;font-size:13px;line-height:16px;color:#A6A6A6;font-weight:400;white-space:nowrap;letter-spacing:-0.4px;">TRUE</div>
<div style="position:absolute;left:860px;top:328px;width:15px;height:19px;border:1px solid #7F9CC8;background:linear-gradient(#F4F7FC 0%,#E6EDF8 45%,#D5E1F1 50%,#DEE8F4 100%);"></div>
<svg style="position:absolute;left:865px;top:337px" width="6" height="4" viewBox="0 0 6 4"><path d="M0 0 L6 0 L3 3.5 Z" fill="#8A8A8A"/></svg>
<div style="position:absolute;left:881px;top:326px;width:117px;height:22px;border:1px solid #B4C8E2;background:#fff;"></div>
<div style="position:absolute;left:884.5px;top:329.50px;font-size:13px;line-height:16px;color:#8C8C8C;font-weight:400;white-space:nowrap;">Add Value</div>
<div style="position:absolute;left:432px;top:116px;width:187px;height:28px;border:2px solid #F00000;"></div>
<div style="position:absolute;left:619px;top:116px;width:77px;height:28px;border:2px solid #F00000;"></div>
<div style="position:absolute;left:396px;top:354.50px;font-size:13px;line-height:16px;color:#2B4C8C;font-weight:400;white-space:nowrap;">Notes/Free Text -</div>
<div style="position:absolute;left:503px;top:353px;width:495px;height:21px;border:1px solid #B4C8E2;"></div>
<div style="position:absolute;left:506px;top:354.50px;font-size:13px;line-height:16px;color:#8C8C8C;font-weight:400;white-space:nowrap;">Add Notes</div>
<div style="position:absolute;left:6px;top:380px;width:994px;height:332px;border:1px solid #7DA2CE;"></div>
<div style="position:absolute;left:7px;top:381px;width:992px;height:28px;background:linear-gradient(#B5C7E2,#DAE5F3);"></div>
<div style="position:absolute;left:7px;top:409px;width:992px;height:1px;background:#7DA2CE;"></div>
<div style="position:absolute;left:8px;top:382px;width:101px;height:26px;border:1px solid #7DA2CE;background:#fff;"></div>
<div style="position:absolute;left:22px;top:388px;width:15px;height:15px;border:1px solid #5B94D0;border-radius:3px;background:#fff;"></div>
<svg style="position:absolute;left:22px;top:384px" width="19" height="19" viewBox="0 0 19 19"><path d="M4.2 9.9 L8.1 13.8 L16.6 5.3" fill="none" stroke="#fff" stroke-width="5" stroke-linecap="butt"/><path d="M4.2 9.9 L8.1 13.8 L16.6 5.3" fill="none" stroke="#3F7CC0" stroke-width="3.2" stroke-linecap="butt" stroke-linejoin="miter"/></svg>
<div style="position:absolute;left:42px;top:387.50px;font-size:13px;line-height:16px;color:#000;font-weight:400;white-space:nowrap;">Check All</div>
<div style="position:absolute;left:113px;top:382px;width:101px;height:26px;border:1px solid #7DA2CE;background:#fff;"></div>
<div style="position:absolute;left:120px;top:388px;width:15px;height:15px;border:1px solid #5B94D0;border-radius:3px;background:#fff;"></div>
<div style="position:absolute;left:136.5px;top:387.50px;font-size:13px;line-height:16px;color:#000;font-weight:400;white-space:nowrap;">UnCheck All</div>
<div style="position:absolute;left:466px;top:386.30px;font-size:15px;line-height:19px;color:#2E5BAA;font-weight:400;white-space:nowrap;letter-spacing:-0.2px;">Query Results</div>
<div style="position:absolute;left:809px;top:388.50px;font-size:13px;line-height:16px;color:#1E2A4A;font-weight:400;white-space:nowrap;">Number of Results:</div>
<div style="position:absolute;left:939.5px;top:387.15px;font-size:14px;line-height:18px;color:#1F4E9A;font-weight:700;white-space:nowrap;">7</div>
<div style="position:absolute;left:7px;top:410px;width:991px;height:32px;background:linear-gradient(#F7F9FC,#D7DFED);"></div>
<div style="position:absolute;left:7px;top:410px;width:36px;height:32px;background:linear-gradient(#F9DAA2,#F2C56B);border-right:1px solid #F29A3A;"></div>
<div style="position:absolute;left:7px;top:442px;width:991px;height:1px;background:#8FAAD0;"></div>
<div style="position:absolute;left:7px;top:442px;width:36px;height:1px;background:#F29A3A;"></div>
<div style="position:absolute;left:132px;top:410px;width:1px;height:32px;background:#98B1D4;"></div>
<div style="position:absolute;left:232px;top:410px;width:1px;height:32px;background:#98B1D4;"></div>
<div style="position:absolute;left:352px;top:410px;width:1px;height:32px;background:#98B1D4;"></div>
<div style="position:absolute;left:422px;top:410px;width:1px;height:32px;background:#98B1D4;"></div>
<div style="position:absolute;left:492px;top:410px;width:1px;height:32px;background:#98B1D4;"></div>
<div style="position:absolute;left:522px;top:410px;width:1px;height:32px;background:#98B1D4;"></div>
<div style="position:absolute;left:552px;top:410px;width:1px;height:32px;background:#98B1D4;"></div>
<div style="position:absolute;left:582px;top:410px;width:1px;height:32px;background:#98B1D4;"></div>
<div style="position:absolute;left:637px;top:410px;width:1px;height:32px;background:#98B1D4;"></div>
<div style="position:absolute;left:687px;top:410px;width:1px;height:32px;background:#98B1D4;"></div>
<div style="position:absolute;left:727px;top:410px;width:1px;height:32px;background:#98B1D4;"></div>
<div style="position:absolute;left:757px;top:410px;width:1px;height:32px;background:#98B1D4;"></div>
<div style="position:absolute;left:802px;top:410px;width:1px;height:32px;background:#98B1D4;"></div>
<div style="position:absolute;left:827px;top:410px;width:1px;height:32px;background:#98B1D4;"></div>
<div style="position:absolute;left:852px;top:410px;width:1px;height:32px;background:#98B1D4;"></div>
<div style="position:absolute;left:877px;top:410px;width:1px;height:32px;background:#98B1D4;"></div>
<div style="position:absolute;left:902px;top:410px;width:1px;height:32px;background:#98B1D4;"></div>
<div style="position:absolute;left:942px;top:410px;width:1px;height:32px;background:#98B1D4;"></div>
<div style="position:absolute;left:997px;top:410px;width:1px;height:32px;background:#98B1D4;"></div>
<div style="position:absolute;left:997px;top:410px;width:1px;height:284px;background:#98B1D4;"></div>
<div style="position:absolute;left:14px;top:420.19px;font-size:11px;line-height:14px;color:#000;font-weight:400;white-space:nowrap;">Add</div>
<div style="position:absolute;left:49px;top:420.19px;font-size:11px;line-height:14px;color:#000;font-weight:400;white-space:nowrap;letter-spacing:-0.3px;">Horse</div>
<div style="position:absolute;left:139px;top:420.19px;font-size:11px;line-height:14px;color:#000;font-weight:400;white-space:nowrap;letter-spacing:-0.3px;">Race Meet</div>
<div style="position:absolute;left:239px;top:420.19px;font-size:11px;line-height:14px;color:#000;font-weight:400;white-space:nowrap;letter-spacing:-0.3px;">DateTime</div>
<div style="position:absolute;left:359px;top:420.19px;font-size:11px;line-height:14px;color:#000;font-weight:400;white-space:nowrap;letter-spacing:-0.3px;">Jockey</div>
<div style="position:absolute;left:429px;top:420.19px;font-size:11px;line-height:14px;color:#000;font-weight:400;white-space:nowrap;letter-spacing:-0.3px;">Trainer</div>
<div style="position:absolute;left:499px;top:420.19px;font-size:11px;line-height:14px;color:#000;font-weight:400;white-space:nowrap;letter-spacing:-0.3px;">No.</div>
<div style="position:absolute;left:529px;top:420.19px;font-size:11px;line-height:14px;color:#000;font-weight:400;white-space:nowrap;letter-spacing:-0.3px;">Stall</div>
<div style="position:absolute;left:559px;top:420.19px;font-size:11px;line-height:14px;color:#000;font-weight:400;white-space:nowrap;letter-spacing:-0.3px;">Age</div>
<div style="position:absolute;left:589px;top:420.19px;font-size:11px;line-height:14px;color:#000;font-weight:400;white-space:nowrap;letter-spacing:-0.3px;">WeightLB</div>
<div style="position:absolute;left:644px;top:420.19px;font-size:11px;line-height:14px;color:#000;font-weight:400;white-space:nowrap;letter-spacing:-0.3px;">Claiming</div>
<div style="position:absolute;left:694px;top:420.19px;font-size:11px;line-height:14px;color:#000;font-weight:400;white-space:nowrap;letter-spacing:-0.3px;">DSLR</div>
<div style="position:absolute;left:734px;top:420.19px;font-size:11px;line-height:14px;color:#000;font-weight:400;white-space:nowrap;letter-spacing:-0.3px;">Sex</div>
<div style="position:absolute;left:764px;top:420.19px;font-size:11px;line-height:14px;color:#000;font-weight:400;white-space:nowrap;letter-spacing:-0.3px;">Form</div>
<div style="position:absolute;left:809px;top:420.19px;font-size:11px;line-height:14px;color:#000;font-weight:400;white-space:nowrap;letter-spacing:-0.3px;">C</div>
<div style="position:absolute;left:834px;top:420.19px;font-size:11px;line-height:14px;color:#000;font-weight:400;white-space:nowrap;letter-spacing:-0.3px;">Di</div>
<div style="position:absolute;left:859px;top:420.19px;font-size:11px;line-height:14px;color:#000;font-weight:400;white-space:nowrap;letter-spacing:-0.3px;">CD</div>
<div style="position:absolute;left:884px;top:420.19px;font-size:11px;line-height:14px;color:#000;font-weight:400;white-space:nowrap;letter-spacing:-0.3px;">BF</div>
<div style="position:absolute;left:909px;top:414.19px;font-size:11px;line-height:14px;color:#000;font-weight:400;white-space:nowrap;">Prov.</div>
<div style="position:absolute;left:909px;top:427.19px;font-size:11px;line-height:14px;color:#000;font-weight:400;white-space:nowrap;">Odds</div>
<div style="position:absolute;left:949px;top:414.19px;font-size:11px;line-height:14px;color:#000;font-weight:400;white-space:nowrap;width:46px;overflow:hidden;">Prov_Odds</div>
<div style="position:absolute;left:949px;top:427.19px;font-size:11px;line-height:14px;color:#000;font-weight:400;white-space:nowrap;">Rank</div>
<div style="position:absolute;left:7px;top:443px;width:990px;height:19px;background:linear-gradient(#FDE2C0 0%,#FCD5A6 34%,#FBB45C 38%,#FBC473 60%,#FCE094 90%,#FDE89E 100%);"></div>
<div style="position:absolute;left:7px;top:462px;width:990px;height:1px;background:#D5DDEA;"></div>
<div style="position:absolute;left:18px;top:446px;width:13px;height:13px;border:1px solid #333;background:#fff;"></div>
<div style="position:absolute;left:46px;top:446.19px;font-size:11px;line-height:14px;color:#000;font-weight:400;white-space:nowrap;letter-spacing:0.2px;transform:scaleX(0.88);transform-origin:left;">BALLYDESMO...</div>
<div style="position:absolute;left:135.5px;top:446.19px;font-size:11px;line-height:14px;color:#000;font-weight:400;white-space:nowrap;letter-spacing:-0.2px;">Worcester</div>
<div style="position:absolute;left:235.5px;top:446.19px;font-size:11px;line-height:14px;color:#000;font-weight:400;white-space:nowrap;letter-spacing:-0.15px;">2024-09-11 16:35:00</div>
<div style="position:absolute;left:355.5px;top:446.19px;font-size:11px;line-height:14px;color:#000;font-weight:400;white-space:nowrap;letter-spacing:-0.2px;">Tom Buckley</div>
<div style="position:absolute;left:425.5px;top:446.19px;font-size:11px;line-height:14px;color:#000;font-weight:400;white-space:nowrap;letter-spacing:-0.2px;">Jamie Sno...</div>
<div style="position:absolute;left:495.5px;top:446.19px;font-size:11px;line-height:14px;color:#000;font-weight:400;white-space:nowrap;letter-spacing:0px;">9</div>
<div style="position:absolute;left:525.5px;top:446.19px;font-size:11px;line-height:14px;color:#000;font-weight:400;white-space:nowrap;letter-spacing:0px;">0</div>
<div style="position:absolute;left:555.5px;top:446.19px;font-size:11px;line-height:14px;color:#000;font-weight:400;white-space:nowrap;letter-spacing:0px;">7</div>
<div style="position:absolute;left:585.5px;top:446.19px;font-size:11px;line-height:14px;color:#000;font-weight:400;white-space:nowrap;letter-spacing:0px;">153</div>
<div style="position:absolute;left:640.5px;top:446.19px;font-size:11px;line-height:14px;color:#000;font-weight:400;white-space:nowrap;letter-spacing:0px;">3</div>
<div style="position:absolute;left:690.5px;top:446.19px;font-size:11px;line-height:14px;color:#000;font-weight:400;white-space:nowrap;letter-spacing:0px;">15</div>
<div style="position:absolute;left:730.5px;top:446.19px;font-size:11px;line-height:14px;color:#000;font-weight:400;white-space:nowrap;letter-spacing:0px;">G</div>
<div style="position:absolute;left:760.5px;top:446.19px;font-size:11px;line-height:14px;color:#000;font-weight:400;white-space:nowrap;letter-spacing:0px;">/14P-3</div>
<div style="position:absolute;left:905.5px;top:446.19px;font-size:11px;line-height:14px;color:#000;font-weight:400;white-space:nowrap;letter-spacing:0px;">13</div>
<div style="position:absolute;left:945.5px;top:446.19px;font-size:11px;line-height:14px;color:#000;font-weight:400;white-space:nowrap;letter-spacing:0px;">5</div>
<div style="position:absolute;left:42px;top:463px;width:1px;height:19px;background:#D5DDEA;"></div>
<div style="position:absolute;left:132px;top:463px;width:1px;height:19px;background:#D5DDEA;"></div>
<div style="position:absolute;left:232px;top:463px;width:1px;height:19px;background:#D5DDEA;"></div>
<div style="position:absolute;left:352px;top:463px;width:1px;height:19px;background:#D5DDEA;"></div>
<div style="position:absolute;left:422px;top:463px;width:1px;height:19px;background:#D5DDEA;"></div>
<div style="position:absolute;left:492px;top:463px;width:1px;height:19px;background:#D5DDEA;"></div>
<div style="position:absolute;left:522px;top:463px;width:1px;height:19px;background:#D5DDEA;"></div>
<div style="position:absolute;left:552px;top:463px;width:1px;height:19px;background:#D5DDEA;"></div>
<div style="position:absolute;left:582px;top:463px;width:1px;height:19px;background:#D5DDEA;"></div>
<div style="position:absolute;left:637px;top:463px;width:1px;height:19px;background:#D5DDEA;"></div>
<div style="position:absolute;left:687px;top:463px;width:1px;height:19px;background:#D5DDEA;"></div>
<div style="position:absolute;left:727px;top:463px;width:1px;height:19px;background:#D5DDEA;"></div>
<div style="position:absolute;left:757px;top:463px;width:1px;height:19px;background:#D5DDEA;"></div>
<div style="position:absolute;left:802px;top:463px;width:1px;height:19px;background:#D5DDEA;"></div>
<div style="position:absolute;left:827px;top:463px;width:1px;height:19px;background:#D5DDEA;"></div>
<div style="position:absolute;left:852px;top:463px;width:1px;height:19px;background:#D5DDEA;"></div>
<div style="position:absolute;left:877px;top:463px;width:1px;height:19px;background:#D5DDEA;"></div>
<div style="position:absolute;left:902px;top:463px;width:1px;height:19px;background:#D5DDEA;"></div>
<div style="position:absolute;left:942px;top:463px;width:1px;height:19px;background:#D5DDEA;"></div>
<div style="position:absolute;left:7px;top:482px;width:990px;height:1px;background:#D5DDEA;"></div>
<div style="position:absolute;left:18px;top:466px;width:13px;height:13px;border:1px solid #333;background:#fff;"></div>
<div style="position:absolute;left:46px;top:466.19px;font-size:11px;line-height:14px;color:#000;font-weight:400;white-space:nowrap;letter-spacing:0.2px;transform:scaleX(0.88);transform-origin:left;">DORRELLS PIE...</div>
<div style="position:absolute;left:135.5px;top:466.19px;font-size:11px;line-height:14px;color:#000;font-weight:400;white-space:nowrap;letter-spacing:-0.2px;">Worcester</div>
<div style="position:absolute;left:235.5px;top:466.19px;font-size:11px;line-height:14px;color:#000;font-weight:400;white-space:nowrap;letter-spacing:-0.15px;">2024-09-11 16:35:00</div>
<div style="position:absolute;left:355.5px;top:466.19px;font-size:11px;line-height:14px;color:#000;font-weight:400;white-space:nowrap;letter-spacing:-0.2px;">David Noo...</div>
<div style="position:absolute;left:425.5px;top:466.19px;font-size:11px;line-height:14px;color:#000;font-weight:400;white-space:nowrap;letter-spacing:-0.2px;">D Summer...</div>
<div style="position:absolute;left:495.5px;top:466.19px;font-size:11px;line-height:14px;color:#000;font-weight:400;white-space:nowrap;letter-spacing:0px;">1</div>
<div style="position:absolute;left:525.5px;top:466.19px;font-size:11px;line-height:14px;color:#000;font-weight:400;white-space:nowrap;letter-spacing:0px;">0</div>
<div style="position:absolute;left:555.5px;top:466.19px;font-size:11px;line-height:14px;color:#000;font-weight:400;white-space:nowrap;letter-spacing:0px;">11</div>
<div style="position:absolute;left:585.5px;top:466.19px;font-size:11px;line-height:14px;color:#000;font-weight:400;white-space:nowrap;letter-spacing:0px;">168</div>
<div style="position:absolute;left:640.5px;top:466.19px;font-size:11px;line-height:14px;color:#000;font-weight:400;white-space:nowrap;letter-spacing:0px;">0</div>
<div style="position:absolute;left:690.5px;top:466.19px;font-size:11px;line-height:14px;color:#000;font-weight:400;white-space:nowrap;letter-spacing:0px;">21</div>
<div style="position:absolute;left:730.5px;top:466.19px;font-size:11px;line-height:14px;color:#000;font-weight:400;white-space:nowrap;letter-spacing:0px;">G</div>
<div style="position:absolute;left:760.5px;top:466.19px;font-size:11px;line-height:14px;color:#000;font-weight:400;white-space:nowrap;letter-spacing:0px;">211115</div>
<div style="position:absolute;left:830.5px;top:466.19px;font-size:11px;line-height:14px;color:#000;font-weight:400;white-space:nowrap;letter-spacing:0px;">D</div>
<div style="position:absolute;left:905.5px;top:466.19px;font-size:11px;line-height:14px;color:#000;font-weight:400;white-space:nowrap;letter-spacing:0px;">17</div>
<div style="position:absolute;left:945.5px;top:466.19px;font-size:11px;line-height:14px;color:#000;font-weight:400;white-space:nowrap;letter-spacing:0px;">9</div>
<div style="position:absolute;left:42px;top:483px;width:1px;height:19px;background:#D5DDEA;"></div>
<div style="position:absolute;left:132px;top:483px;width:1px;height:19px;background:#D5DDEA;"></div>
<div style="position:absolute;left:232px;top:483px;width:1px;height:19px;background:#D5DDEA;"></div>
<div style="position:absolute;left:352px;top:483px;width:1px;height:19px;background:#D5DDEA;"></div>
<div style="position:absolute;left:422px;top:483px;width:1px;height:19px;background:#D5DDEA;"></div>
<div style="position:absolute;left:492px;top:483px;width:1px;height:19px;background:#D5DDEA;"></div>
<div style="position:absolute;left:522px;top:483px;width:1px;height:19px;background:#D5DDEA;"></div>
<div style="position:absolute;left:552px;top:483px;width:1px;height:19px;background:#D5DDEA;"></div>
<div style="position:absolute;left:582px;top:483px;width:1px;height:19px;background:#D5DDEA;"></div>
<div style="position:absolute;left:637px;top:483px;width:1px;height:19px;background:#D5DDEA;"></div>
<div style="position:absolute;left:687px;top:483px;width:1px;height:19px;background:#D5DDEA;"></div>
<div style="position:absolute;left:727px;top:483px;width:1px;height:19px;background:#D5DDEA;"></div>
<div style="position:absolute;left:757px;top:483px;width:1px;height:19px;background:#D5DDEA;"></div>
<div style="position:absolute;left:802px;top:483px;width:1px;height:19px;background:#D5DDEA;"></div>
<div style="position:absolute;left:827px;top:483px;width:1px;height:19px;background:#D5DDEA;"></div>
<div style="position:absolute;left:852px;top:483px;width:1px;height:19px;background:#D5DDEA;"></div>
<div style="position:absolute;left:877px;top:483px;width:1px;height:19px;background:#D5DDEA;"></div>
<div style="position:absolute;left:902px;top:483px;width:1px;height:19px;background:#D5DDEA;"></div>
<div style="position:absolute;left:942px;top:483px;width:1px;height:19px;background:#D5DDEA;"></div>
<div style="position:absolute;left:7px;top:502px;width:990px;height:1px;background:#D5DDEA;"></div>
<div style="position:absolute;left:18px;top:486px;width:13px;height:13px;border:1px solid #333;background:#fff;"></div>
<div style="position:absolute;left:46px;top:486.19px;font-size:11px;line-height:14px;color:#000;font-weight:400;white-space:nowrap;letter-spacing:0.2px;transform:scaleX(0.88);transform-origin:left;">DUKE OF LUC...</div>
<div style="position:absolute;left:135.5px;top:486.19px;font-size:11px;line-height:14px;color:#000;font-weight:400;white-space:nowrap;letter-spacing:-0.2px;">Worcester</div>
<div style="position:absolute;left:235.5px;top:486.19px;font-size:11px;line-height:14px;color:#000;font-weight:400;white-space:nowrap;letter-spacing:-0.15px;">2024-09-11 16:35:00</div>
<div style="position:absolute;left:355.5px;top:486.19px;font-size:11px;line-height:14px;color:#000;font-weight:400;white-space:nowrap;letter-spacing:-0.2px;">Daire McC...</div>
<div style="position:absolute;left:425.5px;top:486.19px;font-size:11px;line-height:14px;color:#000;font-weight:400;white-space:nowrap;letter-spacing:-0.2px;">Martin Keig...</div>
<div style="position:absolute;left:495.5px;top:486.19px;font-size:11px;line-height:14px;color:#000;font-weight:400;white-space:nowrap;letter-spacing:0px;">8</div>
<div style="position:absolute;left:525.5px;top:486.19px;font-size:11px;line-height:14px;color:#000;font-weight:400;white-space:nowrap;letter-spacing:0px;">0</div>
<div style="position:absolute;left:555.5px;top:486.19px;font-size:11px;line-height:14px;color:#000;font-weight:400;white-space:nowrap;letter-spacing:0px;">7</div>
<div style="position:absolute;left:585.5px;top:486.19px;font-size:11px;line-height:14px;color:#000;font-weight:400;white-space:nowrap;letter-spacing:0px;">149</div>
<div style="position:absolute;left:640.5px;top:486.19px;font-size:11px;line-height:14px;color:#000;font-weight:400;white-space:nowrap;letter-spacing:0px;">7</div>
<div style="position:absolute;left:690.5px;top:486.19px;font-size:11px;line-height:14px;color:#000;font-weight:400;white-space:nowrap;letter-spacing:0px;">48</div>
<div style="position:absolute;left:730.5px;top:486.19px;font-size:11px;line-height:14px;color:#000;font-weight:400;white-space:nowrap;letter-spacing:0px;">G</div>
<div style="position:absolute;left:760.5px;top:486.19px;font-size:11px;line-height:14px;color:#000;font-weight:400;white-space:nowrap;letter-spacing:0px;">21-622</div>
<div style="position:absolute;left:830.5px;top:486.19px;font-size:11px;line-height:14px;color:#000;font-weight:400;white-space:nowrap;letter-spacing:0px;">D</div>
<div style="position:absolute;left:905.5px;top:486.19px;font-size:11px;line-height:14px;color:#000;font-weight:400;white-space:nowrap;letter-spacing:0px;">10</div>
<div style="position:absolute;left:945.5px;top:486.19px;font-size:11px;line-height:14px;color:#000;font-weight:400;white-space:nowrap;letter-spacing:0px;">3</div>
<div style="position:absolute;left:42px;top:503px;width:1px;height:19px;background:#D5DDEA;"></div>
<div style="position:absolute;left:132px;top:503px;width:1px;height:19px;background:#D5DDEA;"></div>
<div style="position:absolute;left:232px;top:503px;width:1px;height:19px;background:#D5DDEA;"></div>
<div style="position:absolute;left:352px;top:503px;width:1px;height:19px;background:#D5DDEA;"></div>
<div style="position:absolute;left:422px;top:503px;width:1px;height:19px;background:#D5DDEA;"></div>
<div style="position:absolute;left:492px;top:503px;width:1px;height:19px;background:#D5DDEA;"></div>
<div style="position:absolute;left:522px;top:503px;width:1px;height:19px;background:#D5DDEA;"></div>
<div style="position:absolute;left:552px;top:503px;width:1px;height:19px;background:#D5DDEA;"></div>
<div style="position:absolute;left:582px;top:503px;width:1px;height:19px;background:#D5DDEA;"></div>
<div style="position:absolute;left:637px;top:503px;width:1px;height:19px;background:#D5DDEA;"></div>
<div style="position:absolute;left:687px;top:503px;width:1px;height:19px;background:#D5DDEA;"></div>
<div style="position:absolute;left:727px;top:503px;width:1px;height:19px;background:#D5DDEA;"></div>
<div style="position:absolute;left:757px;top:503px;width:1px;height:19px;background:#D5DDEA;"></div>
<div style="position:absolute;left:802px;top:503px;width:1px;height:19px;background:#D5DDEA;"></div>
<div style="position:absolute;left:827px;top:503px;width:1px;height:19px;background:#D5DDEA;"></div>
<div style="position:absolute;left:852px;top:503px;width:1px;height:19px;background:#D5DDEA;"></div>
<div style="position:absolute;left:877px;top:503px;width:1px;height:19px;background:#D5DDEA;"></div>
<div style="position:absolute;left:902px;top:503px;width:1px;height:19px;background:#D5DDEA;"></div>
<div style="position:absolute;left:942px;top:503px;width:1px;height:19px;background:#D5DDEA;"></div>
<div style="position:absolute;left:7px;top:522px;width:990px;height:1px;background:#D5DDEA;"></div>
<div style="position:absolute;left:18px;top:506px;width:13px;height:13px;border:1px solid #333;background:#fff;"></div>
<div style="position:absolute;left:46px;top:506.19px;font-size:11px;line-height:14px;color:#000;font-weight:400;white-space:nowrap;letter-spacing:0.2px;transform:scaleX(0.88);transform-origin:left;">ENVIOUS EDIT...</div>
<div style="position:absolute;left:135.5px;top:506.19px;font-size:11px;line-height:14px;color:#000;font-weight:400;white-space:nowrap;letter-spacing:-0.2px;">Worcester</div>
<div style="position:absolute;left:235.5px;top:506.19px;font-size:11px;line-height:14px;color:#000;font-weight:400;white-space:nowrap;letter-spacing:-0.15px;">2024-09-11 16:35:00</div>
<div style="position:absolute;left:355.5px;top:506.19px;font-size:11px;line-height:14px;color:#000;font-weight:400;white-space:nowrap;letter-spacing:-0.2px;">Robert Du...</div>
<div style="position:absolute;left:425.5px;top:506.19px;font-size:11px;line-height:14px;color:#000;font-weight:400;white-space:nowrap;letter-spacing:-0.2px;">Gary Han...</div>
<div style="position:absolute;left:495.5px;top:506.19px;font-size:11px;line-height:14px;color:#000;font-weight:400;white-space:nowrap;letter-spacing:0px;">4</div>
<div style="position:absolute;left:525.5px;top:506.19px;font-size:11px;line-height:14px;color:#000;font-weight:400;white-space:nowrap;letter-spacing:0px;">0</div>
<div style="position:absolute;left:555.5px;top:506.19px;font-size:11px;line-height:14px;color:#000;font-weight:400;white-space:nowrap;letter-spacing:0px;">10</div>
<div style="position:absolute;left:585.5px;top:506.19px;font-size:11px;line-height:14px;color:#000;font-weight:400;white-space:nowrap;letter-spacing:0px;">164</div>
<div style="position:absolute;left:640.5px;top:506.19px;font-size:11px;line-height:14px;color:#000;font-weight:400;white-space:nowrap;letter-spacing:0px;">0</div>
<div style="position:absolute;left:690.5px;top:506.19px;font-size:11px;line-height:14px;color:#000;font-weight:400;white-space:nowrap;letter-spacing:0px;">45</div>
<div style="position:absolute;left:730.5px;top:506.19px;font-size:11px;line-height:14px;color:#000;font-weight:400;white-space:nowrap;letter-spacing:0px;">G</div>
<div style="position:absolute;left:760.5px;top:506.19px;font-size:11px;line-height:14px;color:#000;font-weight:400;white-space:nowrap;letter-spacing:0px;">35-115</div>
<div style="position:absolute;left:830.5px;top:506.19px;font-size:11px;line-height:14px;color:#000;font-weight:400;white-space:nowrap;letter-spacing:0px;">D</div>
<div style="position:absolute;left:905.5px;top:506.19px;font-size:11px;line-height:14px;color:#000;font-weight:400;white-space:nowrap;letter-spacing:0px;">13</div>
<div style="position:absolute;left:945.5px;top:506.19px;font-size:11px;line-height:14px;color:#000;font-weight:400;white-space:nowrap;letter-spacing:0px;">6</div>
<div style="position:absolute;left:42px;top:523px;width:1px;height:19px;background:#D5DDEA;"></div>
<div style="position:absolute;left:132px;top:523px;width:1px;height:19px;background:#D5DDEA;"></div>
<div style="position:absolute;left:232px;top:523px;width:1px;height:19px;background:#D5DDEA;"></div>
<div style="position:absolute;left:352px;top:523px;width:1px;height:19px;background:#D5DDEA;"></div>
<div style="position:absolute;left:422px;top:523px;width:1px;height:19px;background:#D5DDEA;"></div>
<div style="position:absolute;left:492px;top:523px;width:1px;height:19px;background:#D5DDEA;"></div>
<div style="position:absolute;left:522px;top:523px;width:1px;height:19px;background:#D5DDEA;"></div>
<div style="position:absolute;left:552px;top:523px;width:1px;height:19px;background:#D5DDEA;"></div>
<div style="position:absolute;left:582px;top:523px;width:1px;height:19px;background:#D5DDEA;"></div>
<div style="position:absolute;left:637px;top:523px;width:1px;height:19px;background:#D5DDEA;"></div>
<div style="position:absolute;left:687px;top:523px;width:1px;height:19px;background:#D5DDEA;"></div>
<div style="position:absolute;left:727px;top:523px;width:1px;height:19px;background:#D5DDEA;"></div>
<div style="position:absolute;left:757px;top:523px;width:1px;height:19px;background:#D5DDEA;"></div>
<div style="position:absolute;left:802px;top:523px;width:1px;height:19px;background:#D5DDEA;"></div>
<div style="position:absolute;left:827px;top:523px;width:1px;height:19px;background:#D5DDEA;"></div>
<div style="position:absolute;left:852px;top:523px;width:1px;height:19px;background:#D5DDEA;"></div>
<div style="position:absolute;left:877px;top:523px;width:1px;height:19px;background:#D5DDEA;"></div>
<div style="position:absolute;left:902px;top:523px;width:1px;height:19px;background:#D5DDEA;"></div>
<div style="position:absolute;left:942px;top:523px;width:1px;height:19px;background:#D5DDEA;"></div>
<div style="position:absolute;left:7px;top:542px;width:990px;height:1px;background:#D5DDEA;"></div>
<div style="position:absolute;left:18px;top:526px;width:13px;height:13px;border:1px solid #333;background:#fff;"></div>
<div style="position:absolute;left:46px;top:526.19px;font-size:11px;line-height:14px;color:#000;font-weight:400;white-space:nowrap;letter-spacing:0.2px;transform:scaleX(0.88);transform-origin:left;">GLOIRE DATHON</div>
<div style="position:absolute;left:135.5px;top:526.19px;font-size:11px;line-height:14px;color:#000;font-weight:400;white-space:nowrap;letter-spacing:-0.2px;">Worcester</div>
<div style="position:absolute;left:235.5px;top:526.19px;font-size:11px;line-height:14px;color:#000;font-weight:400;white-space:nowrap;letter-spacing:-0.15px;">2024-09-11 16:35:00</div>
<div style="position:absolute;left:355.5px;top:526.19px;font-size:11px;line-height:14px;color:#000;font-weight:400;white-space:nowrap;letter-spacing:-0.2px;">James Best</div>
<div style="position:absolute;left:425.5px;top:526.19px;font-size:11px;line-height:14px;color:#000;font-weight:400;white-space:nowrap;letter-spacing:-0.2px;">Sarah Hum...</div>
<div style="position:absolute;left:495.5px;top:526.19px;font-size:11px;line-height:14px;color:#000;font-weight:400;white-space:nowrap;letter-spacing:0px;">6</div>
<div style="position:absolute;left:525.5px;top:526.19px;font-size:11px;line-height:14px;color:#000;font-weight:400;white-space:nowrap;letter-spacing:0px;">0</div>
<div style="position:absolute;left:555.5px;top:526.19px;font-size:11px;line-height:14px;color:#000;font-weight:400;white-space:nowrap;letter-spacing:0px;">8</div>
<div style="position:absolute;left:585.5px;top:526.19px;font-size:11px;line-height:14px;color:#000;font-weight:400;white-space:nowrap;letter-spacing:0px;">158</div>
<div style="position:absolute;left:640.5px;top:526.19px;font-size:11px;line-height:14px;color:#000;font-weight:400;white-space:nowrap;letter-spacing:0px;">0</div>
<div style="position:absolute;left:690.5px;top:526.19px;font-size:11px;line-height:14px;color:#000;font-weight:400;white-space:nowrap;letter-spacing:0px;">85</div>
<div style="position:absolute;left:730.5px;top:526.19px;font-size:11px;line-height:14px;color:#000;font-weight:400;white-space:nowrap;letter-spacing:0px;">G</div>
<div style="position:absolute;left:760.5px;top:526.19px;font-size:11px;line-height:14px;color:#000;font-weight:400;white-space:nowrap;letter-spacing:0px;">P7-564</div>
<div style="position:absolute;left:855.5px;top:526.19px;font-size:11px;line-height:14px;color:#000;font-weight:400;white-space:nowrap;letter-spacing:0px;">CD</div>
<div style="position:absolute;left:905.5px;top:526.19px;font-size:11px;line-height:14px;color:#000;font-weight:400;white-space:nowrap;letter-spacing:0px;">15</div>
<div style="position:absolute;left:945.5px;top:526.19px;font-size:11px;line-height:14px;color:#000;font-weight:400;white-space:nowrap;letter-spacing:0px;">8</div>
<div style="position:absolute;left:42px;top:543px;width:1px;height:19px;background:#D5DDEA;"></div>
<div style="position:absolute;left:132px;top:543px;width:1px;height:19px;background:#D5DDEA;"></div>
<div style="position:absolute;left:232px;top:543px;width:1px;height:19px;background:#D5DDEA;"></div>
<div style="position:absolute;left:352px;top:543px;width:1px;height:19px;background:#D5DDEA;"></div>
<div style="position:absolute;left:422px;top:543px;width:1px;height:19px;background:#D5DDEA;"></div>
<div style="position:absolute;left:492px;top:543px;width:1px;height:19px;background:#D5DDEA;"></div>
<div style="position:absolute;left:522px;top:543px;width:1px;height:19px;background:#D5DDEA;"></div>
<div style="position:absolute;left:552px;top:543px;width:1px;height:19px;background:#D5DDEA;"></div>
<div style="position:absolute;left:582px;top:543px;width:1px;height:19px;background:#D5DDEA;"></div>
<div style="position:absolute;left:637px;top:543px;width:1px;height:19px;background:#D5DDEA;"></div>
<div style="position:absolute;left:687px;top:543px;width:1px;height:19px;background:#D5DDEA;"></div>
<div style="position:absolute;left:727px;top:543px;width:1px;height:19px;background:#D5DDEA;"></div>
<div style="position:absolute;left:757px;top:543px;width:1px;height:19px;background:#D5DDEA;"></div>
<div style="position:absolute;left:802px;top:543px;width:1px;height:19px;background:#D5DDEA;"></div>
<div style="position:absolute;left:827px;top:543px;width:1px;height:19px;background:#D5DDEA;"></div>
<div style="position:absolute;left:852px;top:543px;width:1px;height:19px;background:#D5DDEA;"></div>
<div style="position:absolute;left:877px;top:543px;width:1px;height:19px;background:#D5DDEA;"></div>
<div style="position:absolute;left:902px;top:543px;width:1px;height:19px;background:#D5DDEA;"></div>
<div style="position:absolute;left:942px;top:543px;width:1px;height:19px;background:#D5DDEA;"></div>
<div style="position:absolute;left:7px;top:562px;width:990px;height:1px;background:#D5DDEA;"></div>
<div style="position:absolute;left:18px;top:546px;width:13px;height:13px;border:1px solid #333;background:#fff;"></div>
<div style="position:absolute;left:46px;top:546.19px;font-size:11px;line-height:14px;color:#000;font-weight:400;white-space:nowrap;letter-spacing:0.2px;transform:scaleX(0.88);transform-origin:left;">OPENING BID</div>
<div style="position:absolute;left:135.5px;top:546.19px;font-size:11px;line-height:14px;color:#000;font-weight:400;white-space:nowrap;letter-spacing:-0.2px;">Worcester</div>
<div style="position:absolute;left:235.5px;top:546.19px;font-size:11px;line-height:14px;color:#000;font-weight:400;white-space:nowrap;letter-spacing:-0.15px;">2024-09-11 16:35:00</div>
<div style="position:absolute;left:355.5px;top:546.19px;font-size:11px;line-height:14px;color:#000;font-weight:400;white-space:nowrap;letter-spacing:-0.2px;">Bryan Car...</div>
<div style="position:absolute;left:425.5px;top:546.19px;font-size:11px;line-height:14px;color:#000;font-weight:400;white-space:nowrap;letter-spacing:-0.2px;">Chris Down</div>
<div style="position:absolute;left:495.5px;top:546.19px;font-size:11px;line-height:14px;color:#000;font-weight:400;white-space:nowrap;letter-spacing:0px;">2</div>
<div style="position:absolute;left:525.5px;top:546.19px;font-size:11px;line-height:14px;color:#000;font-weight:400;white-space:nowrap;letter-spacing:0px;">0</div>
<div style="position:absolute;left:555.5px;top:546.19px;font-size:11px;line-height:14px;color:#000;font-weight:400;white-space:nowrap;letter-spacing:0px;">9</div>
<div style="position:absolute;left:585.5px;top:546.19px;font-size:11px;line-height:14px;color:#000;font-weight:400;white-space:nowrap;letter-spacing:0px;">168</div>
<div style="position:absolute;left:640.5px;top:546.19px;font-size:11px;line-height:14px;color:#000;font-weight:400;white-space:nowrap;letter-spacing:0px;">0</div>
<div style="position:absolute;left:690.5px;top:546.19px;font-size:11px;line-height:14px;color:#000;font-weight:400;white-space:nowrap;letter-spacing:0px;">11</div>
<div style="position:absolute;left:730.5px;top:546.19px;font-size:11px;line-height:14px;color:#000;font-weight:400;white-space:nowrap;letter-spacing:0px;">G</div>
<div style="position:absolute;left:760.5px;top:546.19px;font-size:11px;line-height:14px;color:#000;font-weight:400;white-space:nowrap;letter-spacing:0px;">724P53</div>
<div style="position:absolute;left:805.5px;top:546.19px;font-size:11px;line-height:14px;color:#000;font-weight:400;white-space:nowrap;letter-spacing:0px;">C</div>
<div style="position:absolute;left:830.5px;top:546.19px;font-size:11px;line-height:14px;color:#000;font-weight:400;white-space:nowrap;letter-spacing:0px;">D</div>
<div style="position:absolute;left:905.5px;top:546.19px;font-size:11px;line-height:14px;color:#000;font-weight:400;white-space:nowrap;letter-spacing:0px;">13</div>
<div style="position:absolute;left:945.5px;top:546.19px;font-size:11px;line-height:14px;color:#000;font-weight:400;white-space:nowrap;letter-spacing:0px;">7</div>
<div style="position:absolute;left:42px;top:563px;width:1px;height:19px;background:#D5DDEA;"></div>
<div style="position:absolute;left:132px;top:563px;width:1px;height:19px;background:#D5DDEA;"></div>
<div style="position:absolute;left:232px;top:563px;width:1px;height:19px;background:#D5DDEA;"></div>
<div style="position:absolute;left:352px;top:563px;width:1px;height:19px;background:#D5DDEA;"></div>
<div style="position:absolute;left:422px;top:563px;width:1px;height:19px;background:#D5DDEA;"></div>
<div style="position:absolute;left:492px;top:563px;width:1px;height:19px;background:#D5DDEA;"></div>
<div style="position:absolute;left:522px;top:563px;width:1px;height:19px;background:#D5DDEA;"></div>
<div style="position:absolute;left:552px;top:563px;width:1px;height:19px;background:#D5DDEA;"></div>
<div style="position:absolute;left:582px;top:563px;width:1px;height:19px;background:#D5DDEA;"></div>
<div style="position:absolute;left:637px;top:563px;width:1px;height:19px;background:#D5DDEA;"></div>
<div style="position:absolute;left:687px;top:563px;width:1px;height:19px;background:#D5DDEA;"></div>
<div style="position:absolute;left:727px;top:563px;width:1px;height:19px;background:#D5DDEA;"></div>
<div style="position:absolute;left:757px;top:563px;width:1px;height:19px;background:#D5DDEA;"></div>
<div style="position:absolute;left:802px;top:563px;width:1px;height:19px;background:#D5DDEA;"></div>
<div style="position:absolute;left:827px;top:563px;width:1px;height:19px;background:#D5DDEA;"></div>
<div style="position:absolute;left:852px;top:563px;width:1px;height:19px;background:#D5DDEA;"></div>
<div style="position:absolute;left:877px;top:563px;width:1px;height:19px;background:#D5DDEA;"></div>
<div style="position:absolute;left:902px;top:563px;width:1px;height:19px;background:#D5DDEA;"></div>
<div style="position:absolute;left:942px;top:563px;width:1px;height:19px;background:#D5DDEA;"></div>
<div style="position:absolute;left:7px;top:582px;width:990px;height:1px;background:#D5DDEA;"></div>
<div style="position:absolute;left:18px;top:566px;width:13px;height:13px;border:1px solid #333;background:#fff;"></div>
<div style="position:absolute;left:46px;top:566.19px;font-size:11px;line-height:14px;color:#000;font-weight:400;white-space:nowrap;letter-spacing:0.2px;transform:scaleX(0.88);transform-origin:left;">THANK YOU B...</div>
<div style="position:absolute;left:135.5px;top:566.19px;font-size:11px;line-height:14px;color:#000;font-weight:400;white-space:nowrap;letter-spacing:-0.2px;">Worcester</div>
<div style="position:absolute;left:235.5px;top:566.19px;font-size:11px;line-height:14px;color:#000;font-weight:400;white-space:nowrap;letter-spacing:-0.15px;">2024-09-11 16:35:00</div>
<div style="position:absolute;left:355.5px;top:566.19px;font-size:11px;line-height:14px;color:#000;font-weight:400;white-space:nowrap;letter-spacing:-0.2px;">Sean Quinl...</div>
<div style="position:absolute;left:425.5px;top:566.19px;font-size:11px;line-height:14px;color:#000;font-weight:400;white-space:nowrap;letter-spacing:-0.2px;">Jennie Can...</div>
<div style="position:absolute;left:495.5px;top:566.19px;font-size:11px;line-height:14px;color:#000;font-weight:400;white-space:nowrap;letter-spacing:0px;">10</div>
<div style="position:absolute;left:525.5px;top:566.19px;font-size:11px;line-height:14px;color:#000;font-weight:400;white-space:nowrap;letter-spacing:0px;">0</div>
<div style="position:absolute;left:555.5px;top:566.19px;font-size:11px;line-height:14px;color:#000;font-weight:400;white-space:nowrap;letter-spacing:0px;">7</div>
<div style="position:absolute;left:585.5px;top:566.19px;font-size:11px;line-height:14px;color:#000;font-weight:400;white-space:nowrap;letter-spacing:0px;">148</div>
<div style="position:absolute;left:640.5px;top:566.19px;font-size:11px;line-height:14px;color:#000;font-weight:400;white-space:nowrap;letter-spacing:0px;">0</div>
<div style="position:absolute;left:690.5px;top:566.19px;font-size:11px;line-height:14px;color:#000;font-weight:400;white-space:nowrap;letter-spacing:0px;">23</div>
<div style="position:absolute;left:730.5px;top:566.19px;font-size:11px;line-height:14px;color:#000;font-weight:400;white-space:nowrap;letter-spacing:0px;">G</div>
<div style="position:absolute;left:760.5px;top:566.19px;font-size:11px;line-height:14px;color:#000;font-weight:400;white-space:nowrap;letter-spacing:0px;">44-3PF</div>
<div style="position:absolute;left:905.5px;top:566.19px;font-size:11px;line-height:14px;color:#000;font-weight:400;white-space:nowrap;letter-spacing:0px;">10</div>
<div style="position:absolute;left:945.5px;top:566.19px;font-size:11px;line-height:14px;color:#000;font-weight:400;white-space:nowrap;letter-spacing:0px;">4</div>
<div style="position:absolute;left:7px;top:694px;width:992px;height:18px;background:linear-gradient(#A5BCDC,#7F9DC8);border-top:1px solid #C8D6EA;"></div>
<svg style="position:absolute;left:12px;top:698px" width="6" height="9" viewBox="0 0 6 9"><path d="M6 0 L0 4.5 L6 9 Z" fill="#4A5676"/></svg>
<svg style="position:absolute;left:988px;top:698px" width="6" height="9" viewBox="0 0 6 9"><path d="M0 0 L6 4.5 L0 9 Z" fill="#4A5676"/></svg>
<div style="position:absolute;left:24px;top:694px;width:208px;height:17px;border:1px solid #6E86AA;border-radius:2px;background:linear-gradient(#EEF1F6,#E2E7EF 45%,#C6D2E3 46%,#BCCADD);"></div>
<div style="position:absolute;left:124px;top:698px;width:1px;height:9px;background:#7A8CA8;"></div>
<div style="position:absolute;left:126px;top:698px;width:1px;height:9px;background:#7A8CA8;"></div>
<div style="position:absolute;left:128px;top:698px;width:1px;height:9px;background:#7A8CA8;"></div>
<div style="position:absolute;left:130px;top:698px;width:1px;height:9px;background:#7A8CA8;"></div>
<div style="position:absolute;left:21px;top:725.50px;font-size:13px;line-height:16px;color:#2B4C8C;font-weight:400;white-space:nowrap;">Export Selections:</div>
<div style="position:absolute;left:141px;top:717px;width:294px;height:30px;border:1px solid #7DA2CE;background:#fff;"></div>
<svg style="position:absolute;left:194px;top:722px" width="18" height="19" viewBox="0 0 18 19"><rect x="6" y="0" width="6" height="19" rx="2.5" fill="#437CB5"/><rect x="0" y="7" width="18" height="5" fill="#437CB5"/></svg>
<div style="position:absolute;left:219px;top:722.30px;font-size:15px;line-height:19px;color:#000;font-weight:400;white-space:nowrap;">Add to Current TSM Data</div>
<svg style="position:absolute;left:281px;top:131px" width="14" height="22" viewBox="0 0 14 22"><path d="M1.5 1.5 L1.5 17.5 L5.3 13.8 L8.2 20.2 L10.6 19.1 L7.8 12.8 L12.8 12.8 Z" fill="#fff" stroke="#000" stroke-width="1" stroke-linejoin="miter"/></svg>
</body></html>
